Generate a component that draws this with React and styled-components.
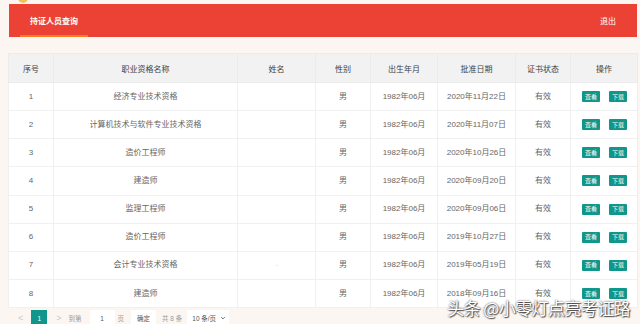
import React from 'react';
import styled, { createGlobalStyle } from 'styled-components';

const GlobalStyle = createGlobalStyle`
  html, body {
    margin: 0;
    padding: 0;
    background: #fcf6f2;
    font-family: "Liberation Sans", "Noto Sans CJK SC", sans-serif;
  }
`;

const Page = styled.div`
  position: relative;
  width: 640px;
  height: 324px;
  overflow: hidden;
  box-sizing: border-box;
  padding: 0 3px 0 8px;
`;

const TopStrip = styled.div`
  height: 4px;
  overflow: hidden;
  padding-left: 10px;
`;

const LogoDot = styled.div`
  width: 10px;
  height: 10px;
  margin-top: -7px;
  border-radius: 50%;
  background: #f2c25a;
`;

const HeaderBar = styled.div`
  height: 33px;
  margin-left: 1px;
  background: #ec4236;
  display: flex;
  align-items: stretch;
  justify-content: space-between;
  padding: 0 21px 0 11px;
`;

const Tab = styled.div`
  width: 68px;
  box-sizing: border-box;
  display: flex;
  align-items: center;
  justify-content: center;
  color: #fff;
  font-size: 8px;
  font-weight: bold;
  border-bottom: 2px solid ${p => (p.active ? '#fb7d1d' : 'transparent')};
  padding-top: 2px;
`;

const Logout = styled.div`
  display: flex;
  align-items: center;
  color: #fff;
  font-size: 8px;
`;

const Table = styled.table`
  margin-top: 16px;
  width: 629px;
  table-layout: fixed;
  border-collapse: collapse;
  background: #fff;
  font-size: 8px;
  color: #666;
`;

const HeadCell = styled.th`
  height: 28px;
  padding: 0;
  background: #f2f2f2;
  color: #3f3f3f;
  font-weight: normal;
  text-align: center;
  border: 1px solid #ebebeb;
`;

const Cell = styled.td`
  height: 27.15px;
  padding: 0;
  text-align: center;
  border: 1px solid #f0f0f0;
  color: ${p => (p.faint ? '#ddd' : '#666')};
  white-space: nowrap;
  line-height: 1;
`;

const Actions = styled.div`
  display: flex;
  justify-content: center;
  gap: 9px;
  padding-left: 1px;
`;

const SmallButton = styled.span`
  display: inline-flex;
  align-items: center;
  justify-content: center;
  width: 18px;
  height: 11px;
  background: #10968a;
  color: #fff;
  font-size: 6px;
  border-radius: 1px;
`;

const Pager = styled.div`
  display: flex;
  align-items: center;
  height: 20px;
  padding: 0 0 0 10px;
  font-size: 6.5px;
  color: #888;
`;

const Arrow = styled.span`
  color: #c8c8c8;
  font-size: 9px;
  margin: ${p => p.m};
`;

const PageNum = styled.span`
  width: 16px;
  height: 16px;
  display: inline-flex;
  align-items: center;
  justify-content: center;
  background: #10968a;
  color: #fff;
  font-size: 6.5px;
`;

const Label = styled.span`
  margin: ${p => p.m || '0'};
  color: #999;
`;

const Box = styled.span`
  display: inline-flex;
  align-items: center;
  justify-content: ${p => p.justify || 'center'};
  width: ${p => p.w}px;
  height: 16px;
  box-sizing: border-box;
  padding: ${p => p.pad || '0'};
  background: #fff;
  color: #555;
  border-radius: 1px;
  margin: ${p => p.m || '0'};
`;

const Chevron = styled.svg`
  width: 6px;
  height: 6px;
`;

const Watermark = styled.div`
  position: absolute;
  right: 10px;
  bottom: 8px;
  color: #fff;
  font-size: 17px;
  letter-spacing: -0.6px;
  font-family: "Noto Sans CJK SC", sans-serif;
  text-shadow: 0 0 2px rgba(0, 0, 0, 0.8), 1px 1px 1px rgba(0, 0, 0, 0.6);
  line-height: 1;
`;

const columns = [
  { title: '序号', width: 45 },
  { title: '职业资格名称', width: 184 },
  { title: '姓名', width: 78 },
  { title: '性别', width: 55 },
  { title: '出生年月', width: 67 },
  { title: '批准日期', width: 78 },
  { title: '证书状态', width: 55 },
  { title: '操作', width: 67 },
];

const rows = [
  ['经济专业技术资格', '2020年11月22日'],
  ['计算机技术与软件专业技术资格', '2020年11月07日'],
  ['造价工程师', '2020年10月26日'],
  ['建造师', '2020年09月20日'],
  ['监理工程师', '2020年09月06日'],
  ['造价工程师', '2019年10月27日'],
  ['会计专业技术资格', '2019年05月19日'],
  ['建造师', '2018年09月16日'],
];

export default function App() {
  return (
    <Page>
      <GlobalStyle />
      <TopStrip><LogoDot /></TopStrip>
      <HeaderBar>
        <Tab active>持证人员查询</Tab>
        <Logout>退出</Logout>
      </HeaderBar>
      <Table>
        <colgroup>
          {columns.map(c => <col key={c.title} style={{ width: c.width }} />)}
        </colgroup>
        <thead>
          <tr>
            {columns.map(c => <HeadCell key={c.title}>{c.title}</HeadCell>)}
          </tr>
        </thead>
        <tbody>
          {rows.map(([name, date], i) => (
            <tr key={i}>
              <Cell>{i + 1}</Cell>
              <Cell>{name}</Cell>
              <Cell faint>{i === 6 ? '-' : ''}</Cell>
              <Cell>男</Cell>
              <Cell>1982年06月</Cell>
              <Cell>{date}</Cell>
              <Cell>有效</Cell>
              <Cell>
                <Actions>
                  <SmallButton>查看</SmallButton>
                  <SmallButton>下载</SmallButton>
                </Actions>
              </Cell>
            </tr>
          ))}
        </tbody>
      </Table>
      <Pager>
        <Arrow m="0 8px 0 0">&lt;</Arrow>
        <PageNum>1</PageNum>
        <Arrow m="0 7px 0 9px">&gt;</Arrow>
        <Label>到第</Label>
        <Box w={25} m="0 0 0 8px">1</Box>
        <Label m="0 7px 0 3px">页</Label>
        <Box w={25}>确定</Box>
        <Label m="0 5px 0 6px">共 8 条</Label>
        <Box w={42} justify="space-between" pad="0 3px 0 5px">
          10 条/页
          <Chevron viewBox="0 0 10 10">
            <path d="M2 3.5 L5 6.5 L8 3.5" fill="none" stroke="#555" strokeWidth="1.4" />
          </Chevron>
        </Box>
      </Pager>
      <Watermark>头条 @小零灯点亮考证路</Watermark>
    </Page>
  );
}
